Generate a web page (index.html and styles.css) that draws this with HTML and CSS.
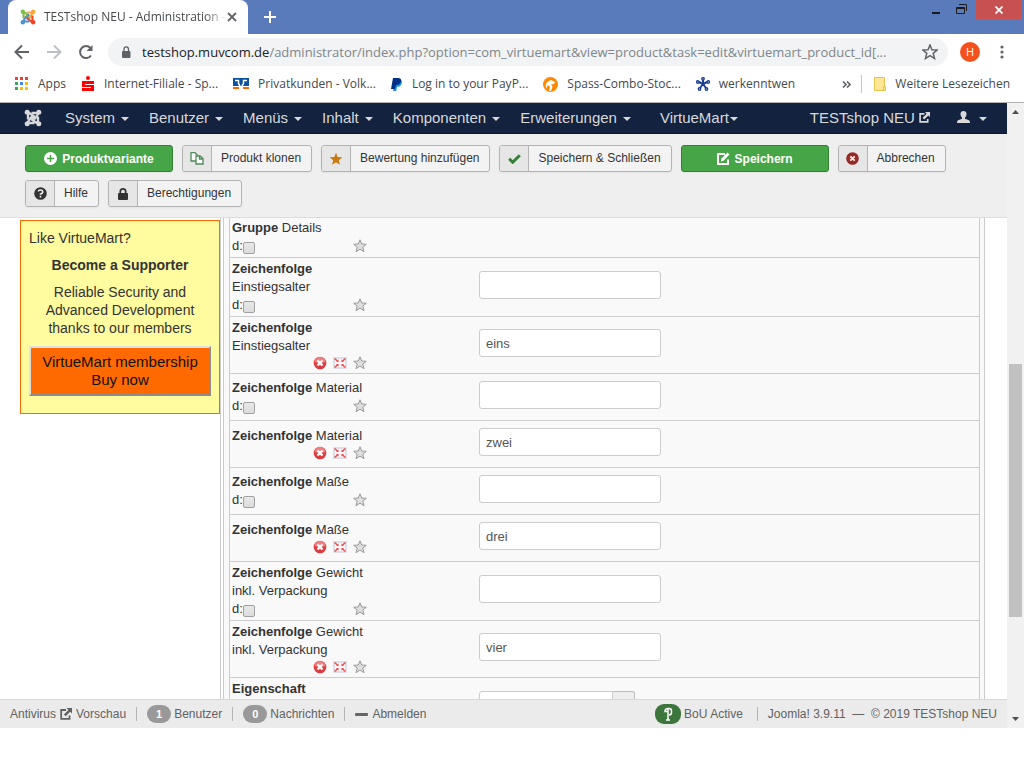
FILE: index.html
```html
<!DOCTYPE html>
<html lang="de">
  <head>
    <meta charset="UTF-8" />
    <meta name="viewport" content="width=device-width, initial-scale=1.0" />
    <title>TESTshop NEU - Administration</title>
    <link rel="stylesheet" href="styles.css">
  </head>

  <body>
    <!-- Shared icons -->
    <svg class="sprite" width="0" height="0" aria-hidden="true">
      <symbol id="joomla" viewBox="0 0 18 18">
        <g id="arm" fill="currentColor">
          <circle cx="3.2" cy="3.2" r="2.5" />
          <path d="M4 10.500V6.500Q4 3 6.800 5L12 10.200" fill="none" stroke="currentColor" stroke-width="2.4" />
        </g>
        <use href="#arm" transform="rotate(90 9 9)" />
        <use href="#arm" transform="rotate(180 9 9)" />
        <use href="#arm" transform="rotate(270 9 9)" />
      </symbol>
      <symbol id="external" viewBox="0 0 12 12">
        <path d="M6 2H1.200v8.800H9.500V7.500" fill="none" stroke="currentColor" stroke-width="1.800" />
        <path d="M6.500 0H12v5.500L10.200 3.700 5.700 8.200 3.900 6.400 8.400 1.900z" fill="currentColor" />
      </symbol>
      <symbol id="star" viewBox="0 0 14 14">
        <path d="M7 .8l1.700 4.200 4.600.3-3.500 2.900 1.200 4.500L7 10.200l-4 2.500 1.200-4.500L.7 5.300 5.300 5z" />
      </symbol>
      <symbol id="remove" viewBox="0 0 14 14">
        <circle cx="7" cy="7" r="6.300" fill="#e03a3e" />
        <path d="M1.500 6a5.500 5 0 0 1 11 0q-5.500 2-11 0z" fill="#f08080" />
        <path d="M4.500 4.500l5 5M9.500 4.500l-5 5" stroke="#fff" stroke-width="2.400" />
      </symbol>
      <symbol id="move" viewBox="0 0 14 12">
        <rect width="14" height="12" fill="#dcdfe8" />
        <rect x="2" y="2" width="10" height="8" fill="#f6f6fa" />
        <path d="M1.500 1.500l3 2.500M12.500 1.500l-3 2.500M1.500 10.500l3-2.500M12.500 10.500l-3-2.500" stroke="#ee4545" stroke-width="1.400" />
        <path d="M5.500 5H3l2.500-2.500zM8.500 5H11L8.500 2.500zM5.500 7H3l2.500 2.500zM8.500 7H11L8.500 9.500z" fill="#ee4545" />
      </symbol>
    </svg>

    <div class="window">
      <header class="browser">
        <div class="tab-strip">
          <div class="tab">
            <svg class="tab-icon" viewBox="0 0 18 18">
              <use href="#arm" color="#7ac143" />
              <use href="#arm" color="#f9a541" transform="rotate(90 9 9)" />
              <use href="#arm" color="#f44321" transform="rotate(180 9 9)" />
              <use href="#arm" color="#5091cd" transform="rotate(270 9 9)" />
            </svg>
            <span class="tab-title">TESTshop NEU - Administration -</span>
            <button class="tab-close" aria-label="Tab schließen">
              <svg width="10" height="10" viewBox="0 0 10 10"><path d="M1 1l8 8M9 1L1 9" stroke="#5f6368" stroke-width="1.800" /></svg>
            </button>
          </div>
          <button class="new-tab" aria-label="Neuer Tab">
            <svg width="12" height="12" viewBox="0 0 12 12"><path d="M6 0v12M0 6h12" stroke="#fff" stroke-width="2" /></svg>
          </button>
          <div class="window-buttons">
            <button aria-label="Minimieren"><svg width="10" height="12" viewBox="0 0 10 12"><path d="M1 9h8" stroke="#1b1b1b" stroke-width="2" /></svg></button>
            <button aria-label="Wiederherstellen">
              <svg width="12" height="12" viewBox="0 0 12 12" fill="none" stroke="#1b1b1b"><path d="M3 .5h7.500V7M.5 3.500h8v6h-8zM.5 4.500h8" /></svg>
            </button>
            <button class="window-close" aria-label="Schließen"><svg width="8" height="8" viewBox="0 0 8 8"><path d="M.5.500l7 7M7.500.500l-7 7" stroke="#fff" stroke-width="1.800" /></svg></button>
          </div>
        </div>

        <div class="address-row">
          <button aria-label="Zurück"><svg width="16" height="16" viewBox="0 0 16 16" fill="none" stroke="#5f6368" stroke-width="2"><path d="M15 8H2M8 1.500L1.500 8 8 14.500" /></svg></button>
          <button aria-label="Vor"><svg width="16" height="16" viewBox="0 0 16 16" fill="none" stroke="#bdc1c6" stroke-width="2"><path d="M1 8h13M8 1.500L14.500 8 8 14.500" /></svg></button>
          <button class="reload" aria-label="Neu laden"><svg width="16" height="16" viewBox="0 0 16 16"><path d="M13 11.500A6 6 0 1 1 12.500 4" fill="none" stroke="#5f6368" stroke-width="2" /><path d="M14.500 1v6h-6z" fill="#5f6368" /></svg></button>
          <div class="address">
            <svg width="10" height="13" viewBox="0 0 10 13"><rect x="1" y="5" width="8.500" height="7" rx="1" fill="#5f6368" /><path d="M3 5V3.200a2.200 2.200 0 0 1 4.500 0V5" fill="none" stroke="#5f6368" stroke-width="1.300" /></svg>
            <span class="url"><span class="host">testshop.muvcom.de</span>/administrator/index.php?option=com_virtuemart&amp;view=product&amp;task=edit&amp;virtuemart_product_id[...</span>
            <svg width="16" height="16" viewBox="0 0 14 14" fill="none" stroke="#5f6368" stroke-width="1.300"><use href="#star" /></svg>
          </div>
          <span class="profile">H</span>
          <button class="menu" aria-label="Menü"><svg width="4" height="14" viewBox="0 0 4 14" fill="#5f6368"><circle cx="2" cy="2" r="1.600" /><circle cx="2" cy="7" r="1.600" /><circle cx="2" cy="12" r="1.600" /></svg></button>
        </div>

        <nav class="bookmarks">
          <a href="#"><svg width="14" height="14" viewBox="0 0 14 14"><path d="M0 0h3v3H0zM5 0h3v3H5zM10 0h3v3h-3z" fill="#ea4335" /><path d="M0 5h3v3H0zM0 10h3v3H0z" fill="#34a853" /><path d="M5 5h3v3H5z" fill="#4285f4" /><path d="M10 5h3v3h-3zM5 10h3v3H5zM10 10h3v3h-3z" fill="#fbbc05" /></svg>Apps</a>
          <a href="#"><svg width="14" height="16" viewBox="0 0 14 16"><g fill="#f00"><circle cx="7" cy="2" r="2" /><rect x="1" y="5" width="12" height="3" /><rect x="1" y="5" width="3" height="6" /><rect x="1" y="9" width="12" height="2" /><rect x="10" y="9" width="3" height="6" /><rect x="1" y="12" width="12" height="3" /></g></svg>Internet-Filiale - Sp...</a>
          <a href="#"><svg width="16" height="12" viewBox="0 0 16 12"><path d="M0 0h16v8H0z" fill="#0a50a0" /><path d="M2 2.500h3.500v3L7 8M14 2.500h-3.500v3L9 8" stroke="#fff" stroke-width="1.500" fill="none" /><path d="M0 9h6v2H0zM10 9h6v2h-6z" fill="#ff6600" /></svg>Privatkunden - Volk...</a>
          <a href="#"><svg width="12" height="13" viewBox="0 0 12 13"><path d="M4 2h6q2 2 0 5-1 2-4 2l-.700 4H2z" fill="#179bd7" /><path d="M2 0h5q4 0 3 3.500T5 7L4 11H0z" fill="#003087" /></svg>Log in to your PayP...</a>
          <a href="#"><svg width="15" height="15" viewBox="0 0 15 15"><circle cx="7.500" cy="7.500" r="7.500" fill="#f80" /><path d="M3 12Q1.500 6 6 4l2-1 4 2-1 2-3 .500 1.500 2L8 14H6l1-4-2-2q-1.500 2-2 4z" fill="#fff" /></svg>Spass-Combo-Stoc...</a>
          <a href="#"><svg width="14" height="14" viewBox="0 0 14 14" fill="none" stroke="#1c3f94" stroke-width="1.400"><path d="M7 7V3M7 7L3 5M7 7l4-2M7 7l-3 4M7 7l3 4" stroke-width="2" /><circle cx="7" cy="1.800" r="1.200" /><circle cx="1.800" cy="5" r="1.200" /><circle cx="12.200" cy="5" r="1.200" /><circle cx="3.500" cy="12" r="1.200" /><circle cx="10.500" cy="12" r="1.200" /></svg>werkenntwen</a>
          <button class="more" aria-label="Mehr"><svg width="9" height="7" viewBox="0 0 9 7"><path d="M1 .5l3 3-3 3M5 .5l3 3-3 3" fill="none" stroke="#5f6368" stroke-width="1.600" /></svg></button>
          <a href="#" class="other"><svg width="12" height="14" viewBox="0 0 12 14"><path d="M.5.500h10v13H.5z" fill="#ffe694" stroke="#e8c44d" /><path d="M9.500 9.500h2v4h-2z" fill="#ffe694" stroke="#e8c44d" /></svg>Weitere Lesezeichen</a>
        </nav>
      </header>

      <div class="viewport">
        <div class="admin">
          <nav class="navbar">
            <a class="brand" href="#" aria-label="Joomla"><svg width="18" height="18"><use href="#joomla" /></svg></a>
            <a class="dropdown" href="#">System</a>
            <a class="dropdown" href="#">Benutzer</a>
            <a class="dropdown" href="#">Menüs</a>
            <a class="dropdown" href="#">Inhalt</a>
            <a class="dropdown" href="#">Komponenten</a>
            <a class="dropdown" href="#">Erweiterungen</a>
            <a class="dropdown virtuemart" href="#">VirtueMart</a>
            <a class="site" href="#">TESTshop NEU <svg width="11" height="11"><use href="#external" /></svg></a>
            <a class="dropdown user" href="#" aria-label="Benutzerkonto"><svg width="13" height="12" viewBox="0 0 13 12"><path d="M6.500 0q3 0 3 3.200 0 2.500-1.500 3.600v1l4 1.400q1 .5 1 2.800H0Q0 9.700 1 9.200l4-1.400v-1Q3.500 5.700 3.500 3.200 3.500 0 6.500 0z" fill="currentColor" /></svg></a>
          </nav>

          <div class="toolbar">
            <button class="btn btn-success">
              <svg width="13" height="13" viewBox="0 0 13 13"><circle cx="6.500" cy="6.500" r="6.500" fill="#fff" /><path d="M6.500 3v7M3 6.500h7" stroke="#46a546" stroke-width="1.500" /></svg>Produktvariante
            </button>
            <button class="btn">
              <span class="btn-icon"><svg width="14" height="13" viewBox="0 0 14 13" fill="#fff" stroke="#4d8a55" stroke-width="1.300"><path d="M1 .7h4l2.500 2.500V9H1z" /><path d="M6 4h4l3 2.500V12H6zM9.500 4v3H13" /></svg></span>
              <span class="btn-text">Produkt klonen</span>
            </button>
            <button class="btn">
              <span class="btn-icon"><svg width="14" height="14" fill="#cd7a0c"><use href="#star" /></svg></span>
              <span class="btn-text">Bewertung hinzufügen</span>
            </button>
            <button class="btn">
              <span class="btn-icon"><svg width="13" height="10" viewBox="0 0 13 10"><path d="M1.200 4.800l3.500 3.500L11.800 1.300" fill="none" stroke="#378137" stroke-width="3" /></svg></span>
              <span class="btn-text">Speichern &amp; Schließen</span>
            </button>
            <button class="btn btn-success">
              <svg width="13" height="13" viewBox="0 0 13 13"><path d="M8 2H1v10h10V7.500" fill="none" stroke="#fff" stroke-width="2" /><path d="M4 9.500L4.500 6.500 10.500.5l2 2L6.500 8.700z" fill="#fff" /></svg>Speichern
            </button>
            <button class="btn">
              <span class="btn-icon"><svg width="13" height="13" viewBox="0 0 13 13"><circle cx="6.500" cy="6.500" r="6.300" fill="#942a25" /><path d="M4.300 4.300l4.400 4.400M8.700 4.300L4.300 8.700" stroke="#eee" stroke-width="1.800" /></svg></span>
              <span class="btn-text">Abbrechen</span>
            </button>
            <button class="btn">
              <span class="btn-icon"><svg width="13" height="13" viewBox="0 0 13 13"><circle cx="6.500" cy="6.500" r="6.300" fill="#333" /><path d="M4.300 4.500Q4.500 3 6.500 3T8.700 4.700 6.500 7v.8M6.500 8.800v1.600" fill="none" stroke="#eee" stroke-width="1.600" /></svg></span>
              <span class="btn-text">Hilfe</span>
            </button>
            <button class="btn">
              <span class="btn-icon"><svg width="10" height="12" viewBox="0 0 10 12"><rect y="5" width="10" height="7" rx="1" fill="#333" /><path d="M2.300 6V3.600a2.700 2.700 0 0 1 5.400 0V6" fill="none" stroke="#333" stroke-width="1.700" /></svg></span>
              <span class="btn-text">Berechtigungen</span>
            </button>
          </div>

          <div class="content">
            <aside class="supporter">
              <p class="question">Like VirtueMart?</p>
              <p><strong>Become a Supporter</strong></p>
              <p>Reliable Security and Advanced Development thanks to our members</p>
              <button class="buy">VirtueMart membership<br />Buy now</button>
            </aside>

            <main class="panel">
              <table class="fields">
                <tr class="first">
                  <td>
                    <div class="label"><b>Gruppe</b> Details</div>
                    <div class="tools"><label>d:<input type="checkbox" /></label><svg class="star"><use href="#star" /></svg></div>
                  </td>
                  <td></td>
                </tr>
                <tr>
                  <td>
                    <div class="label"><b>Zeichenfolge</b> Einstiegsalter</div>
                    <div class="tools"><label>d:<input type="checkbox" /></label><svg class="star"><use href="#star" /></svg></div>
                  </td>
                  <td><input type="text" aria-label="Einstiegsalter" /></td>
                </tr>
                <tr>
                  <td>
                    <div class="label"><b>Zeichenfolge</b> Einstiegsalter</div>
                    <div class="tools actions"><svg class="remove"><use href="#remove" /></svg><svg class="move"><use href="#move" /></svg><svg class="star"><use href="#star" /></svg></div>
                  </td>
                  <td><input type="text" aria-label="Einstiegsalter" value="eins" /></td>
                </tr>
                <tr>
                  <td>
                    <div class="label"><b>Zeichenfolge</b> Material</div>
                    <div class="tools"><label>d:<input type="checkbox" /></label><svg class="star"><use href="#star" /></svg></div>
                  </td>
                  <td><input type="text" aria-label="Material" /></td>
                </tr>
                <tr>
                  <td>
                    <div class="label"><b>Zeichenfolge</b> Material</div>
                    <div class="tools actions"><svg class="remove"><use href="#remove" /></svg><svg class="move"><use href="#move" /></svg><svg class="star"><use href="#star" /></svg></div>
                  </td>
                  <td><input type="text" aria-label="Material" value="zwei" /></td>
                </tr>
                <tr>
                  <td>
                    <div class="label"><b>Zeichenfolge</b> Maße</div>
                    <div class="tools"><label>d:<input type="checkbox" /></label><svg class="star"><use href="#star" /></svg></div>
                  </td>
                  <td><input type="text" aria-label="Maße" /></td>
                </tr>
                <tr>
                  <td>
                    <div class="label"><b>Zeichenfolge</b> Maße</div>
                    <div class="tools actions"><svg class="remove"><use href="#remove" /></svg><svg class="move"><use href="#move" /></svg><svg class="star"><use href="#star" /></svg></div>
                  </td>
                  <td><input type="text" aria-label="Maße" value="drei" /></td>
                </tr>
                <tr>
                  <td>
                    <div class="label"><b>Zeichenfolge</b> Gewicht<br />inkl. Verpackung</div>
                    <div class="tools"><label>d:<input type="checkbox" /></label><svg class="star"><use href="#star" /></svg></div>
                  </td>
                  <td><input type="text" aria-label="Gewicht inkl. Verpackung" /></td>
                </tr>
                <tr>
                  <td>
                    <div class="label"><b>Zeichenfolge</b> Gewicht<br />inkl. Verpackung</div>
                    <div class="tools actions"><svg class="remove"><use href="#remove" /></svg><svg class="move"><use href="#move" /></svg><svg class="star"><use href="#star" /></svg></div>
                  </td>
                  <td><input type="text" aria-label="Gewicht inkl. Verpackung" value="vier" /></td>
                </tr>
                <tr class="property">
                  <td><div class="label"><b>Eigenschaft</b></div></td>
                  <td><div class="date"><input type="text" aria-label="Eigenschaft" /><button aria-label="Auswählen"></button></div></td>
                </tr>
              </table>
            </main>
          </div>

          <footer class="status">
            <a href="#">Antivirus</a>
            <a href="#" class="preview"><svg width="12" height="12"><use href="#external" /></svg>Vorschau</a>
            <span class="group"><span class="badge">1</span>Benutzer</span>
            <span class="group"><span class="badge">0</span>Nachrichten</span>
            <a href="#" class="group logout"><svg width="13" height="3" viewBox="0 0 13 3"><rect width="13" height="3" rx="1" fill="#666" /></svg>Abmelden</a>
            <span class="active">
              <svg width="26" height="20" viewBox="0 0 26 20"><rect width="26" height="20" rx="9" fill="#3c763d" /><path d="M13 16V4.500h1q2.500 0 2.500 2.500v1.500q0 2.500-2.500 2.500M13 4.500Q10 4.500 10 7.500h3M11 16h4" fill="none" stroke="#fff" stroke-width="1.500" /></svg>BoU Active
            </span>
            <span class="group version">Joomla! 3.9.11 &nbsp;—&nbsp; © 2019 TESTshop NEU</span>
          </footer>
        </div>

        <div class="scrollbar">
          <svg width="7" height="4" viewBox="0 0 7 4"><path d="M0 4L3.500 0 7 4z" fill="#505050" /></svg>
          <div class="track"><div class="thumb"></div></div>
          <svg width="7" height="4" viewBox="0 0 7 4"><path d="M0 0L3.500 4 7 0z" fill="#505050" /></svg>
        </div>
      </div>
    </div>
  </body>
</html>
```

FILE: styles.css
```css
html {
  box-sizing: border-box;
}

*,
*:before,
*:after {
  box-sizing: inherit;
}

body {
  margin: 0;
  background: #fff;
  color: #333;
  font-family: "Liberation Sans", Arial, sans-serif;
  font-size: 13px;
  line-height: 18px;
}

p {
  margin: 0;
}

a {
  color: inherit;
  text-decoration: none;
}

button {
  padding: 0;
  border: 0;
  background: none;
  color: inherit;
  font: inherit;
}

svg {
  flex: none;
}

.sprite {
  position: absolute;
}

.window {
  display: flex;
  flex-direction: column;
  height: calc(100vh - 40px);
}

/* Browser frame */
.browser {
  flex: none;
  font-family: "Open Sans", sans-serif;
  border-bottom: 1px solid #b4b4b4;
}

.tab-strip {
  display: flex;
  height: 34px;
  padding-left: 8px;
  background: #5a7bbb;
}

.tab {
  display: flex;
  align-items: center;
  width: 240px;
  padding: 0 11px 0 12px;
  border-radius: 8px 8px 0 0;
  background: #fff;
  font-size: 12px;
}

.tab-icon {
  width: 16px;
  height: 16px;
}

.tab-title {
  flex: 1;
  margin-left: 8px;
  white-space: nowrap;
  color: #45494d;
  -webkit-mask-image: linear-gradient(to right, #000 88%, transparent);
  mask-image: linear-gradient(to right, #000 88%, transparent);
}

.tab-close,
.new-tab {
  display: flex;
  align-items: center;
  justify-content: center;
  width: 10px;
}

.new-tab {
  width: 14px;
  margin-left: 15px;
}

.window-buttons {
  display: flex;
  margin-left: auto;
  padding-right: 3px;
}

.window-buttons button {
  display: flex;
  align-items: center;
  justify-content: center;
  width: 26px;
  height: 19px;
}

.window-buttons .window-close {
  width: 45px;
  margin-left: 1px;
  background: #c75050;
}

.address-row {
  display: flex;
  align-items: center;
  height: 36px;
  padding: 0 14px;
}

.address-row button {
  display: flex;
  width: 32px;
}

.address-row .reload {
  width: 30px;
}

.address {
  display: flex;
  flex: 1;
  align-items: center;
  min-width: 0;
  height: 28px;
  padding: 0 10px 0 13px;
  border-radius: 14px;
  background: #f1f3f4;
}

.url {
  flex: 1;
  min-width: 0;
  margin-left: 11px;
  overflow: hidden;
  white-space: nowrap;
  color: #80868b;
  font-size: 13px;
}

.host {
  color: #202124;
}

.profile {
  width: 20px;
  margin: 0 30px 0 12px;
  border-radius: 50%;
  background: #f4511e;
  color: #fff;
  font-size: 11px;
  line-height: 20px;
  text-align: center;
}

.address-row .menu {
  width: 4px;
  margin: 0 6px 0 -10px;
}

.bookmarks {
  display: flex;
  align-items: center;
  height: 32px;
  padding: 0 14px 4px 15px;
  color: #45494d;
  font-size: 12px;
  white-space: nowrap;
}

.bookmarks a {
  display: flex;
  align-items: center;
  gap: 9px;
  margin-right: 15px;
}

.bookmarks .more {
  display: flex;
  margin: 0 10px 0 auto;
}

.bookmarks .other {
  margin: 0;
  padding-left: 12px;
  border-left: 1px solid #c4c4c4;
}

.viewport {
  display: flex;
  flex: 1;
  min-height: 0;
}

.admin {
  display: flex;
  flex: 1;
  flex-direction: column;
  min-width: 0;
}

.scrollbar {
  display: flex;
  flex: none;
  flex-direction: column;
  align-items: center;
  width: 17px;
  padding: 7px 2px;
  background: #f1f1f1;
}

.track {
  flex: 1;
  width: 100%;
}

.thumb {
  height: 42%;
  margin-top: 250px;
  background: #c1c1c1;
}

/* Administration menu */
.navbar {
  display: flex;
  flex: none;
  align-items: center;
  height: 31px;
  padding: 0 10px 0 24px;
  border-bottom: 1px solid #0b1628;
  background: #13223f;
  color: #d9d9d9;
  font-size: 15px;
  white-space: nowrap;
}

.navbar a {
  padding: 0 10px;
}

.navbar .brand {
  display: flex;
  margin-right: 13px;
  padding: 0;
}

.dropdown:after {
  display: inline-block;
  margin-left: 6px;
  border: 4px solid transparent;
  border-top-color: currentColor;
  border-bottom: 0;
  vertical-align: middle;
  content: "";
}

.navbar .virtuemart {
  margin-left: 9px;
}

.virtuemart:after {
  margin-left: 1px;
}

.navbar .site {
  margin-left: auto;
}

.navbar .user {
  padding-left: 17px;
}

.user:after {
  margin-left: 9px;
}

/* Buttons */
.toolbar {
  display: flex;
  flex: none;
  flex-wrap: wrap;
  gap: 8px 9px;
  padding: 11px 25px 10px;
  border-bottom: 1px solid #ddd;
  background: #efefef;
}

.btn {
  display: flex;
  height: 27px;
  border: 1px solid #b3b3b3;
  border-radius: 3px;
  background: #f3f3f3;
  box-shadow: 0 1px 2px rgba(0, 0, 0, 0.05);
  font-size: 12px;
  white-space: nowrap;
}

.btn-icon {
  display: flex;
  align-items: center;
  justify-content: center;
  width: 29px;
  height: 100%;
  border-right: 1px solid #b3b3b3;
  border-radius: 3px 0 0 3px;
  background: #e6e6e6;
}

.btn-text {
  padding: 0 10px 0 9px;
  line-height: 25px;
}

.btn-success {
  align-items: center;
  justify-content: center;
  gap: 5px;
  width: 148px;
  border-color: #378137;
  background: #46a546;
  color: #fff;
  font-weight: bold;
}

/* Page content */
.content {
  display: flex;
  flex: 1;
  min-height: 0;
  padding: 0 22px 0 20px;
  overflow: hidden;
}

.supporter {
  flex: none;
  align-self: flex-start;
  width: 200px;
  margin-top: 2px;
  padding: 8px 8px 17px;
  border: 1px solid #ff6a00;
  background: #fffb9f;
  font-size: 14px;
  text-align: center;
}

.supporter p {
  padding: 0 9px;
  margin-bottom: 9px;
}

.supporter .question {
  padding: 0;
  text-align: left;
}

.buy {
  width: 100%;
  padding: 5px;
  border: 2px outset #e0e0e0;
  background: #ff6a00;
  color: #111;
  font-size: 15px;
}

.panel {
  flex: 1;
  min-width: 0;
  align-self: flex-start;
  padding: 0 4px 0 8px;
  border: solid #ccc;
  border-width: 0 1px;
  background: linear-gradient(to right, transparent 2px, #ccc 2px, #ccc 3px, #f9f9f9 3px);
}

.fields {
  width: 100%;
  border: solid #ccc;
  border-width: 0 1px;
  border-spacing: 0;
}

.fields td {
  height: 47px;
  padding: 2px;
  border-bottom: 1px solid #ccc;
  vertical-align: middle;
}

.fields td:first-child {
  width: 249px;
}

.fields .first td {
  height: 40px;
  padding-top: 1px;
}

.fields .property td {
  height: 59px;
}

.fields .property td:first-child {
  vertical-align: top;
}

.label,
.tools {
  width: 135px;
}

.tools {
  display: flex;
  align-items: center;
  justify-content: space-between;
  height: 18px;
}

.tools label {
  display: flex;
}

.tools input {
  width: 12px;
  height: 12px;
  margin: 5px 0 0;
  border: 1px solid #a0a0a0;
  border-radius: 2px;
  background: linear-gradient(#e8e8e8, #dcdcdc);
  appearance: none;
}

.actions {
  justify-content: flex-end;
  gap: 6px;
  height: 16px;
}

.star,
.remove,
.move {
  width: 14px;
  height: 14px;
}

.star {
  fill: #dedede;
  stroke: #999;
}

.fields input[type="text"] {
  display: block;
  width: 182px;
  height: 28px;
  margin: 0 0 4px;
  padding: 4px 6px;
  border: 1px solid #ccc;
  border-radius: 3px;
  background: #fff;
  color: #555;
  font: inherit;
}

.fields td:last-child {
  padding-left: 0;
}

.date {
  display: flex;
}

.fields .date input {
  width: 134px;
  border-radius: 3px 0 0 3px;
}

.date button {
  width: 22px;
  height: 28px;
  border: 1px solid #bbb;
  border-left: 0;
  border-radius: 0 3px 3px 0;
  background: #eee;
}

/* Status bar */
.status {
  display: flex;
  flex: none;
  align-items: center;
  height: 29px;
  padding: 0 10px;
  border-top: 1px solid #d8d8d8;
  background: #ebebeb;
  color: #626262;
  font-size: 12px;
  white-space: nowrap;
}

.preview {
  display: flex;
  align-items: center;
  gap: 4px;
  margin-left: 4px;
}

.group {
  display: flex;
  align-items: center;
  height: 14px;
  margin-left: 10px;
  padding-left: 10px;
  border-left: 1px solid #b5b5b5;
}

.badge {
  margin-right: 3px;
  padding: 0 9px;
  border-radius: 9px;
  background: #999;
  color: #fff;
  font-size: 11px;
  font-weight: bold;
}

.logout {
  gap: 4px;
}

.active {
  display: flex;
  align-items: center;
  gap: 3px;
  margin-left: auto;
}

.version {
  margin-left: 14px;
}
```
